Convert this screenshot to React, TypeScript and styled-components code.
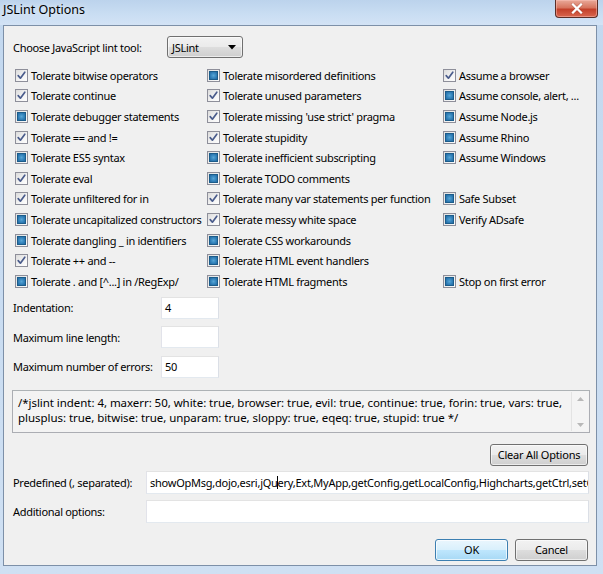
import React from "react";
import styled, { createGlobalStyle } from "styled-components";

const GlobalStyle = createGlobalStyle`
  html, body { margin: 0; padding: 0; background: #c9dbef; }
  * { box-sizing: border-box; }
`;

const FONT = `"Segoe UI", "Noto Sans", "Open Sans", sans-serif`;

const Win = styled.div`
  width: 603px;
  height: 574px;
  display: flex;
  flex-direction: column;
  background: linear-gradient(to bottom, #c3d8ef, #cfe0f3);
  font-family: ${FONT};
  font-size: 11px;
  letter-spacing: -0.3px;
  color: #000;
  overflow: hidden;
`;

const TitleBar = styled.div`
  height: 25px;
  flex: none;
  display: flex;
  justify-content: space-between;
  align-items: flex-start;
  padding-left: 3px;
  background: linear-gradient(to bottom, #bcd3ec 0%, #cadef3 60%, #d3e3f5 100%);
`;

const Title = styled.div`
  font-size: 12.5px;
  letter-spacing: 0;
  line-height: 20px;
  color: #000;
  text-shadow: 0 0 6px rgba(255, 255, 255, 0.9);
`;

const CloseButton = styled.div`
  width: 43px;
  height: 18px;
  margin-right: 5px;
  border: 1px solid #5b2d26;
  border-top: none;
  border-radius: 0 0 4px 4px;
  background: linear-gradient(to bottom, #e9a999 0%, #d7755f 45%, #c3402a 55%, #d9664e 100%);
  box-shadow: inset 0 0 0 1px rgba(255, 200, 190, 0.45);
  display: flex;
  align-items: center;
  justify-content: center;
`;

const Frame = styled.div`
  flex: 1;
  min-height: 0;
  display: flex;
  padding: 0 6px 8px 3px;
`;

const Content = styled.div`
  flex: 1;
  min-width: 0;
  overflow: hidden;
  display: flex;
  flex-direction: column;
  background: #f0f0f0;
  border: 1px solid #7d90a8;
  padding: 10px 7px 0 9px;
`;

const ChooseRow = styled.div`
  display: flex;
  align-items: center;
  height: 22px;
`;

const Label = styled.div<{ $w: number }>`
  width: ${(p) => p.$w}px;
  flex: none;
  white-space: nowrap;
`;

const Combo = styled.div`
  width: 76px;
  height: 22px;
  border: 1px solid #707070;
  border-radius: 3px;
  background: linear-gradient(to bottom, #f2f2f2 0%, #ebebeb 48%, #dddddd 52%, #cfcfcf 100%);
  box-shadow: inset 0 0 0 1px rgba(255, 255, 255, 0.6);
  display: flex;
  align-items: center;
  justify-content: space-between;
  padding: 0 6px 0 4px;
`;

const CheckGrid = styled.div`
  margin-top: 7px;
  display: grid;
  grid-template-columns: 192px 236px 1fr;
  grid-auto-rows: 20.6px;
  padding-left: 2px;
`;

const CheckItem = styled.div`
  display: flex;
  align-items: center;
  gap: 3px;
  white-space: nowrap;
  min-width: 0;
`;

const Box = styled.span<{ $on: boolean }>`
  width: 13px;
  height: 13px;
  flex: none;
  border: 1px solid #8e8f9a;
  background: ${(p) =>
    p.$on
      ? "linear-gradient(135deg, #dcdcdc 0%, #f4f4f4 60%, #fdfdfd 100%)"
      : "linear-gradient(135deg, #e2e2e2, #fafafa)"};
  display: flex;
  align-items: center;
  justify-content: center;
`;

const Mixed = styled.span`
  width: 9px;
  height: 9px;
  border: 1px solid #1b5c8a;
  background: radial-gradient(circle at 50% 50%, #58a6d6 0%, #3383bb 55%, #2467a0 100%);
`;

const Fields = styled.div`
  margin-top: 5px;
  display: flex;
  flex-direction: column;
  gap: 7.5px;
`;

const FieldRow = styled.div<{ $h?: number }>`
  display: flex;
  align-items: center;
  height: ${(p) => p.$h ?? 22}px;
  min-width: 0;
`;

const TextBox = styled.div<{ $w?: number }>`
  height: 100%;
  ${(p) => (p.$w ? `width: ${p.$w}px; flex: none;` : "flex: 1; min-width: 0;")}
  background: #fff;
  border: 1px solid #abadb3;
  border-top-color: #e3e3e3;
  border-left-color: #e2e3ea;
  border-right-color: #dbdfe6;
  border-bottom-color: #e3e9ef;
  display: flex;
  align-items: center;
  padding: 0 3px 0 3px;
  white-space: nowrap;
  overflow: hidden;
  font-size: 11px;
  letter-spacing: -0.25px;
`;

const Caret = styled.span`
  display: inline-block;
  flex: none;
  width: 1px;
  height: 13px;
  background: #000;
  margin: 0 -0.5px;
`;

const TextArea = styled.div`
  margin-top: 12px;
  margin-left: -1px;
  margin-right: -1px;
  height: 43px;
  border: 1px solid #abadb3;
  border-top-color: #adb2b5;
  background: #f3f3f3;
  display: flex;
  min-width: 0;
`;

const AreaText = styled.div`
  flex: 1;
  min-width: 0;
  padding: 4px 5px;
  line-height: 15px;
  font-size: 11.5px;
  letter-spacing: -0.05px;
  white-space: pre;
  overflow: hidden;
`;

const ScrollBar = styled.div`
  width: 17px;
  flex: none;
  margin: 1px 1px 1px 0;
  border-left: 1px solid #e3e3e3;
  background: #f4f4f4;
  display: flex;
  flex-direction: column;
  justify-content: space-between;
  align-items: center;
  padding: 5px 0 4px;
`;

const ClearRow = styled.div`
  margin-top: 11px;
  display: flex;
  justify-content: flex-end;
  padding-right: 1px;
`;

const Button = styled.div<{ $w: number; $default?: boolean }>`
  width: ${(p) => p.$w}px;
  height: 22px;
  border: 1px solid ${(p) => (p.$default ? "#3c7fb1" : "#707070")};
  border-radius: 3px;
  background: ${(p) =>
    p.$default
      ? "linear-gradient(to bottom, #eaf6fd 0%, #d9f0fc 48%, #bee6fd 52%, #a7d9f5 100%)"
      : "linear-gradient(to bottom, #f2f2f2 0%, #ebebeb 48%, #dddddd 52%, #cfcfcf 100%)"};
  box-shadow: inset 0 0 0 1px ${(p) => (p.$default ? "rgba(255,255,255,0.7)" : "rgba(255,255,255,0.6)")};
  display: flex;
  align-items: center;
  justify-content: center;
  white-space: nowrap;
  letter-spacing: -0.2px;
`;

const Predefined = styled.div`
  margin-top: 5px;
  display: flex;
  flex-direction: column;
  gap: 6px;
`;

const ButtonRow = styled.div`
  margin-top: 16px;
  display: flex;
  justify-content: flex-end;
  gap: 7px;
  padding-right: 1px;
`;

type Opt = { label: string; on: boolean } | null;

const col1: Opt[] = [
  { label: "Tolerate bitwise operators", on: true },
  { label: "Tolerate continue", on: true },
  { label: "Tolerate debugger statements", on: false },
  { label: "Tolerate == and !=", on: true },
  { label: "Tolerate ES5 syntax", on: false },
  { label: "Tolerate eval", on: true },
  { label: "Tolerate unfiltered for in", on: true },
  { label: "Tolerate uncapitalized constructors", on: false },
  { label: "Tolerate dangling _ in identifiers", on: false },
  { label: "Tolerate ++ and --", on: true },
  { label: "Tolerate . and [^...] in /RegExp/", on: false },
];

const col2: Opt[] = [
  { label: "Tolerate misordered definitions", on: false },
  { label: "Tolerate unused parameters", on: true },
  { label: "Tolerate missing 'use strict' pragma", on: true },
  { label: "Tolerate stupidity", on: true },
  { label: "Tolerate inefficient subscripting", on: false },
  { label: "Tolerate TODO comments", on: false },
  { label: "Tolerate many var statements per function", on: true },
  { label: "Tolerate messy white space", on: true },
  { label: "Tolerate CSS workarounds", on: false },
  { label: "Tolerate HTML event handlers", on: false },
  { label: "Tolerate HTML fragments", on: false },
];

const col3: Opt[] = [
  { label: "Assume a browser", on: true },
  { label: "Assume console, alert, ...", on: false },
  { label: "Assume Node.js", on: false },
  { label: "Assume Rhino", on: false },
  { label: "Assume Windows", on: false },
  null,
  { label: "Safe Subset", on: false },
  { label: "Verify ADsafe", on: false },
  null,
  null,
  { label: "Stop on first error", on: false },
];

const CheckMark = () => (
  <svg width="9" height="9" viewBox="0 0 9 9">
    <path d="M1.2 4.6 L3.4 7.2 L7.8 1.2" fill="none" stroke="#4a5c8c" strokeWidth="1.7" strokeLinejoin="round" strokeLinecap="round" />
  </svg>
);

const Check = ({ opt }: { opt: Opt }) => {
  if (!opt) return <div />;
  return (
    <CheckItem>
      <Box $on={opt.on}>{opt.on ? <CheckMark /> : <Mixed />}</Box>
      <span>{opt.label}</span>
    </CheckItem>
  );
};

export default function App() {
  const rows = col1.map((_, i) => i);
  return (
    <>
      <GlobalStyle />
      <Win>
        <TitleBar>
          <Title>JSLint Options</Title>
          <CloseButton>
            <svg width="12" height="11" viewBox="0 0 12 11">
              <path d="M2 1.5 L10 9.5 M10 1.5 L2 9.5" stroke="#7a2a1f" strokeWidth="3.2" strokeLinecap="square" opacity="0.35" />
              <path d="M2 1.5 L10 9.5 M10 1.5 L2 9.5" stroke="#ffffff" strokeWidth="2.3" strokeLinecap="square" />
            </svg>
          </CloseButton>
        </TitleBar>
        <Frame>
          <Content>
            <ChooseRow>
              <Label $w={154}>Choose JavaScript lint tool:</Label>
              <Combo>
                <span>JSLint</span>
                <svg width="8" height="5" viewBox="0 0 8 5">
                  <path d="M0 0 L8 0 L4 4.5 Z" fill="#000" />
                </svg>
              </Combo>
            </ChooseRow>
            <CheckGrid>
              {rows.map((i) => (
                <React.Fragment key={i}>
                  <Check opt={col1[i]} />
                  <Check opt={col2[i]} />
                  <Check opt={col3[i]} />
                </React.Fragment>
              ))}
            </CheckGrid>
            <Fields>
              <FieldRow>
                <Label $w={148}>Indentation:</Label>
                <TextBox $w={58}>4</TextBox>
              </FieldRow>
              <FieldRow>
                <Label $w={148}>Maximum line length:</Label>
                <TextBox $w={58} />
              </FieldRow>
              <FieldRow>
                <Label $w={148}>Maximum number of errors:</Label>
                <TextBox $w={58}>50</TextBox>
              </FieldRow>
            </Fields>
            <TextArea>
              <AreaText>
                {"/*jslint indent: 4, maxerr: 50, white: true, browser: true, evil: true, continue: true, forin: true, vars: true,\nplusplus: true, bitwise: true, unparam: true, sloppy: true, eqeq: true, stupid: true */"}
              </AreaText>
              <ScrollBar>
                <svg width="7" height="4" viewBox="0 0 7 4">
                  <path d="M0 4 L3.5 0 L7 4 Z" fill="#b8b8b8" />
                </svg>
                <svg width="7" height="4" viewBox="0 0 7 4">
                  <path d="M0 0 L7 0 L3.5 4 Z" fill="#b8b8b8" />
                </svg>
              </ScrollBar>
            </TextArea>
            <ClearRow>
              <Button $w={98}>Clear All Options</Button>
            </ClearRow>
            <Predefined>
              <FieldRow $h={23}>
                <Label $w={133}>Predefined (, separated):</Label>
                <TextBox>
                  showOpMsg,dojo,esri,jQu<Caret />ery,Ext,MyApp,getConfig,getLocalConfig,Highcharts,getCtrl,setCtrl
                </TextBox>
              </FieldRow>
              <FieldRow $h={23}>
                <Label $w={133}>Additional options:</Label>
                <TextBox />
              </FieldRow>
            </Predefined>
            <ButtonRow>
              <Button $w={73} $default>OK</Button>
              <Button $w={73}>Cancel</Button>
            </ButtonRow>
          </Content>
        </Frame>
      </Win>
    </>
  );
}
